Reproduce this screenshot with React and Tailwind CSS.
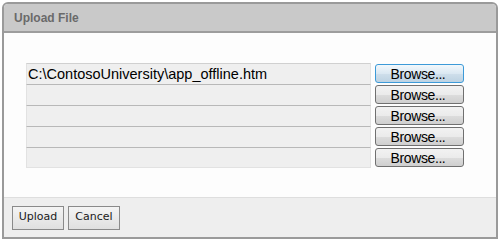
import React from "react";

function BrowseBtn({ focused }) {
  return (
    <button
      className={
        "flex h-[19px] w-[89px] items-center justify-center rounded-[3px] border pr-[3px] text-[14px] leading-none tracking-[-0.4px] text-black " +
        (focused
          ? "border-[#3c9ad8] bg-[linear-gradient(#f2f8fc,#dbe8f2_50%,#cfdfeb_51%,#bdd2e2)]"
          : "border-[#707070] bg-[linear-gradient(#f2f2f2,#ebebeb_50%,#dddddd_51%,#cfcfcf)]")
      }
    >
      Browse...
    </button>
  );
}

export default function App() {
  const rows = ["C:\\ContosoUniversity\\app_offline.htm", "", "", "", ""];
  return (
    <div className="h-[241px] w-[500px] bg-white p-[2px] font-['Liberation_Sans',Arial,sans-serif]">
      <div className="flex h-[237px] w-[496px] flex-col overflow-hidden rounded-tl-[6px] rounded-tr-[6px] border-2 border-[#9a9a9a] bg-[#fdfdfd]">
        <div className="flex h-[29px] shrink-0 items-center border-b-2 border-[#9d9d9d] bg-[#c9c9c9] pl-[10px] text-[12px] font-bold text-[#6a6a6a]">
          Upload File
        </div>
        <div className="flex flex-1 flex-col pl-[22px] pt-[30px]">
          {rows.map((r, i) => (
            <div key={i} className="flex items-center">
              <div
                className={
                  "flex h-[21px] w-[345px] items-center border-x border-[#e2e2e2] bg-[#efefef] pl-[1px] text-[14.5px] leading-none text-black " +
                  (i === 0 ? "border-t border-t-[#d0d0d0] " : "border-t border-t-[#b8b8b8] ") +
                  (i === 4 ? "border-b border-b-[#e2e2e2]" : "")
                }
              >
                {r}
              </div>
              <div className="ml-[4px]">
                <BrowseBtn focused={i === 0} />
              </div>
            </div>
          ))}
        </div>
        <div className="flex h-[40px] shrink-0 items-center gap-[4px] border-t border-[#dedede] bg-[#eeeeee] pl-[8px]">
          <button className="h-[24px] w-[52px] border border-[#8a8a8a] bg-[linear-gradient(#f4f4f4,#e0e0e0)] font-['DejaVu_Sans',sans-serif] text-[11px] text-[#1a1a1a]">
            Upload
          </button>
          <button className="h-[24px] w-[52px] border border-[#8a8a8a] bg-[linear-gradient(#f4f4f4,#e0e0e0)] font-['DejaVu_Sans',sans-serif] text-[11px] text-[#1a1a1a]">
            Cancel
          </button>
        </div>
      </div>
    </div>
  );
}
